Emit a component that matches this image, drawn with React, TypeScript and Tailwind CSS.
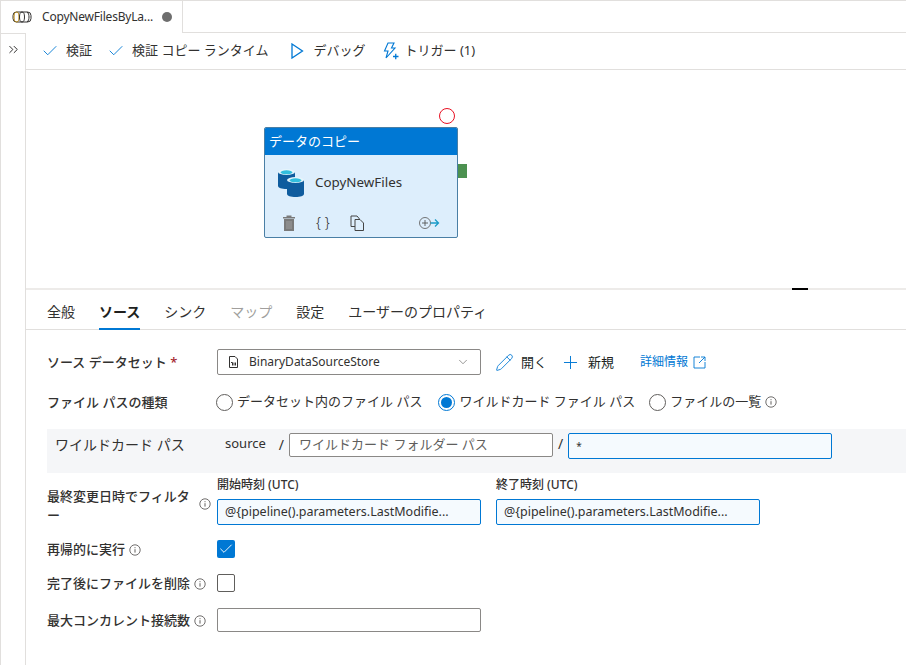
import React from "react";
import { ChevronDown, ChevronsRight, Check, Pencil, Plus } from "lucide-react";

const font = { fontFamily: '"Noto Sans", "Noto Sans CJK JP", sans-serif' };

const Info = () => (
  <svg width="12" height="12" viewBox="0 0 12 12" className="shrink-0 text-[#605e5c]" fill="none" stroke="currentColor">
    <circle cx="6" cy="6" r="5.2" strokeWidth="0.9" />
    <path d="M6 5.2v3.4M6 3.2v1" strokeWidth="1" />
  </svg>
);

const Radio = ({ checked }: { checked?: boolean }) => (
  <span
    className={
      "flex h-[17px] w-[17px] shrink-0 items-center justify-center rounded-full border " +
      (checked ? "border-[#0078d4]" : "border-[#605e5c]")
    }
  >
    {checked && <span className="h-[11px] w-[11px] rounded-full bg-[#0078d4]" />}
  </span>
);

const PipelineIcon = () => (
  <svg width="20" height="14" viewBox="0 0 20 14" fill="none" stroke="#323130" strokeWidth="1">
    <rect x="1" y="2" width="18" height="10" rx="3.5" />
    <ellipse cx="4.5" cy="7" rx="2.5" ry="5" stroke="#b8860b" />
    <ellipse cx="10" cy="7" rx="2.5" ry="5" />
    <path d="M15 2c1.5 1 2 3 2 5s-.5 4-2 5" />
  </svg>
);

const Cylinder = ({ className }: { className: string }) => (
  <svg width="17" height="20" viewBox="0 0 17 20" className={className}>
    <path d="M0 3v14c0 1.7 3.8 3 8.5 3s8.500-1.300 8.500-3V3z" fill="#0f5c9e" />
    <ellipse cx="8.500" cy="3" rx="8.500" ry="3" fill="#e6f5fb" />
    <ellipse cx="8.500" cy="3.300" rx="6" ry="2" fill="#32bedd" />
  </svg>
);

const TabItem = ({ label, active, muted }: { label: string; active?: boolean; muted?: boolean }) => (
  <div
    className={
      "mb-[-1px] flex h-[40px] items-center border-b-2 pt-[5px] text-[14px] " +
      (active ? "border-[#0078d4] font-semibold text-[#201f1e]" : "border-transparent ") +
      (muted ? "text-[#a19f9d]" : active ? "" : "text-[#323130]")
    }
  >
    {label}
  </div>
);

const Label = ({ children, info, className }: { children: React.ReactNode; info?: boolean; className?: string }) => (
  <div className={"flex w-[170px] shrink-0 items-center gap-[4px] text-[13px] font-medium text-[#323130] " + (className || "")}>
    <span className="whitespace-nowrap">{children}</span>
    {info && <Info />}
  </div>
);

export default function App() {
  return (
    <div className="h-[665px] w-[906px] overflow-hidden bg-white text-[#323130]" style={font}>
      {/* tab strip */}
      <div className="flex h-[33px] border-t border-[#e1dfdd]">
        <div className="flex w-[183px] items-center border-x border-[#e1dfdd] pl-[11px] text-[12px]">
          <PipelineIcon />
          <span className="ml-[10px] whitespace-nowrap tracking-[-0.2px]">CopyNewFilesByLa...</span>
          <span className="ml-[9px] h-[10px] w-[10px] rounded-full bg-[#6e6e6e]" />
        </div>
        <div className="flex-1 border-b border-[#e1dfdd]" />
      </div>

      <div className="flex h-[632px]">
        {/* collapsed side rail */}
        <div className="w-[26px] shrink-0 border-x border-t border-[#e1dfdd] pl-[5px] pt-[8px]">
          <ChevronsRight size={15} strokeWidth={1.6} />
        </div>

        <div className="min-w-0 flex-1">
          {/* toolbar */}
          <div className="flex h-[37px] items-center border-b border-[#e1dfdd] pl-[15px] text-[13px]">
            <Check size={18} strokeWidth={1.2} className="text-[#0078d4]" />
            <span className="ml-[7px]">検証</span>
            <Check size={18} strokeWidth={1.2} className="ml-[15px] text-[#0078d4]" />
            <span className="ml-[7px]">検証 コピー ランタイム</span>
            <svg width="13" height="16" viewBox="0 0 13 16" fill="none" stroke="#0078d4" strokeWidth="1.3" className="ml-[22px]">
              <path d="M1 1l10.500 7L1 15z" />
            </svg>
            <span className="ml-[10px]">デバッグ</span>
            <svg width="16" height="18" viewBox="0 0 16 18" fill="none" stroke="#0078d4" strokeWidth="1.1" className="ml-[17px]">
              <path d="M5 1h6L8.500 6H12L3 16l2-7H1.500z" />
              <path d="M10 14.500h5.500M12.750 11.750v5.500" strokeWidth="1.300" />
            </svg>
            <span className="ml-[6px]">トリガー (1)</span>
          </div>

          {/* canvas */}
          <div className="relative h-[220px] border-b-2 border-[#edebe9]">
            <span className="absolute left-[413px] top-[38px] h-[16px] w-[16px] rounded-full border border-[#e81123]" />
            <span className="absolute left-[432px] top-[94px] h-[14px] w-[9px] bg-[#4c9150]" />
            <div className="absolute left-[238px] top-[57px] h-[111px] w-[194px] overflow-hidden rounded-[2px] border border-[#4a7fa5] bg-[#ddeefc]">
              <div className="flex h-[27px] items-center bg-[#0078d4] pl-[4px] pt-[1px] text-[13px] text-white">データのコピー</div>
              <div className="flex h-[56px] items-center pl-[13px]">
                <div className="relative h-[28px] w-[26px]">
                  <Cylinder className="absolute left-0 top-0" />
                  <Cylinder className="absolute bottom-0 right-0" />
                </div>
                <span className="ml-[11px] mt-[-2px] text-[13.400px] text-[#323130]">CopyNewFiles</span>
              </div>
              <div className="flex items-center pl-[17px] pt-[4px] text-[#323130]">
                <svg width="14" height="16" viewBox="0 0 14 16">
                  <path d="M1 2h12v1.500H1zM4.500 .5h5V2h-5zM2 4h10v12H2z" fill="#7a7a7a" />
                  <path d="M5 6v8M7 6v8M9 6v8" stroke="#a8a8a8" strokeWidth="0.8" />
                </svg>
                <span className="ml-[20px] w-[14px] whitespace-nowrap text-[14px] font-light leading-none">{"{ }"}</span>
                <svg width="15" height="16" viewBox="0 0 15 16" fill="#ddeefc" stroke="#444" strokeWidth="1" className="ml-[20px]">
                  <path d="M1 1h6l2.500 3v7.500H1z" />
                  <path d="M5 4.500h5l3.500 3.500v7.500H5z" />
                </svg>
                <svg width="22" height="14" viewBox="0 0 22 14" fill="none" className="ml-[53px]">
                  <circle cx="7" cy="7" r="5.500" stroke="#666" strokeWidth="0.9" />
                  <path d="M4 7h6M7 4v6" stroke="#555" strokeWidth="0.9" />
                  <path d="M12.500 7h8M17 3.500 20.500 7 17 10.500" stroke="#1a9bc7" strokeWidth="1.300" />
                </svg>
              </div>
            </div>
            <span className="absolute left-[766px] top-[218px] h-[2px] w-[16px] bg-black" />
          </div>

          {/* property tabs */}
          <div className="flex h-[40px] items-end gap-[24px] border-b border-[#e1dfdd] pl-[21px]">
            <TabItem label="全般" />
            <TabItem label="ソース" active />
            <TabItem label="シンク" />
            <TabItem label="マップ" muted />
            <TabItem label="設定" />
            <TabItem label="ユーザーのプロパティ" />
          </div>

          {/* form */}
          <div className="pl-[21px] pt-[19px]">
            <div className="flex h-[26px] items-center">
              <Label className="pt-[1px]">
                ソース データセット <span className="text-[#a4262c]">*</span>
              </Label>
              <div className="flex h-[26px] w-[264px] items-center rounded-[2px] border border-[#8a8886] pl-[10px] pr-[10px] text-[12px]">
                <svg width="11" height="12" viewBox="0 0 11 12" fill="none" stroke="#323130" strokeWidth="1">
                  <path d="M1.500 .5h5.500l2.500 2.500v8.500h-8z" />
                  <path d="M3 6.500h1.500v3M6 6.500v3M7.500 6.500v3" />
                </svg>
                <span className="ml-[10px] flex-1">BinaryDataSourceStore</span>
                <ChevronDown size={14} strokeWidth={1.1} className="text-[#605e5c]" />
              </div>
              <Pencil size={19} strokeWidth={1.1} className="ml-[14px] text-[#0078d4]" />
              <span className="ml-[7px] pt-[2px] text-[13px] text-[#201f1e]">開く</span>
              <Plus size={21} strokeWidth={1.1} className="ml-[13px] text-[#0078d4]" />
              <span className="ml-[7px] pt-[2px] text-[13px] text-[#201f1e]">新規</span>
              <span className="ml-[26px] text-[12px] text-[#0078d4]">詳細情報</span>
              <svg width="13" height="13" viewBox="0 0 13 13" fill="none" stroke="#0078d4" strokeWidth="0.9" className="ml-[5px]">
                <path d="M7 1H1v11h11V6M8 1h4v4M12 1 6 7" />
              </svg>
            </div>

            <div className="mt-[14px] flex h-[26px] items-center text-[13px]">
              <Label className="pt-[2px]">ファイル パスの種類</Label>
              <span className="ml-[-1px]"><Radio /></span>
              <span className="ml-[4px]">データセット内のファイル パス</span>
              <span className="ml-[16px]"><Radio checked /></span>
              <span className="ml-[4px]">ワイルドカード ファイル パス</span>
              <span className="ml-[14px]"><Radio /></span>
              <span className="ml-[4px]">ファイルの一覧</span>
              <span className="ml-[4px]"><Info /></span>
            </div>

            <div className="mt-[14px] flex h-[44px] bg-[#f5f6f8] pl-[8px] pt-[4px]">
              <span className="w-[170px] pt-[1px] text-[14px]">ワイルドカード パス</span>
              <span className="pt-[1px] text-[13px]">source</span>
              <span className="ml-[13px] pt-[1px] text-[14px]">/</span>
              <div className="ml-[5px] flex h-[24px] w-[264px] items-center rounded-[2px] border border-[#8a8886] bg-white pl-[9px] text-[13px] text-[#605e5c]">
                ワイルドカード フォルダー パス
              </div>
              <span className="ml-[5px] text-[14px]">/</span>
              <div className="ml-[5px] flex h-[26px] w-[264px] items-center rounded-[2px] border border-[#0078d4] bg-[#f5fafe] pl-[7px] text-[10px]">
                *
              </div>
            </div>

            <div className="flex pt-[3px]">
              <div className="flex w-[170px] shrink-0 items-center pt-[10px] text-[13px] font-medium leading-[19px]">
                <span className="w-[148px]">最終変更日時でフィルター</span>
                <span className="ml-[4px] mt-[-4px]"><Info /></span>
              </div>
              <div>
                <div className="text-[12px] font-medium leading-[18px]">開始時刻 (UTC)</div>
                <div className="mt-[5px] flex h-[26px] w-[264px] items-center rounded-[2px] border border-[#0078d4] bg-[#f5fafe] pl-[7px] text-[12.500px]">
                  @{"{"}pipeline().parameters.LastModifie...
                </div>
              </div>
              <div className="ml-[15px]">
                <div className="text-[12px] font-medium leading-[18px]">終了時刻 (UTC)</div>
                <div className="mt-[5px] flex h-[26px] w-[264px] items-center rounded-[2px] border border-[#0078d4] bg-[#f5fafe] pl-[7px] text-[12.500px]">
                  @{"{"}pipeline().parameters.LastModifie...
                </div>
              </div>
            </div>

            <div className="mt-[15px] flex h-[18px] items-center">
              <Label info className="pt-[1px]">再帰的に実行</Label>
              <span className="flex h-[18px] w-[18px] items-center justify-center rounded-[2px] bg-[#0078d4]">
                <Check size={16} strokeWidth={1.4} className="text-white" />
              </span>
            </div>

            <div className="mt-[16px] flex h-[18px] items-center">
              <Label info className="pt-[1px]">完了後にファイルを削除</Label>
              <span className="h-[18px] w-[18px] rounded-[2px] border border-[#605e5c]" />
            </div>

            <div className="mt-[16px] flex h-[24px] items-center">
              <Label info className="pt-[1px]">最大コンカレント接続数</Label>
              <div className="h-[24px] w-[264px] rounded-[2px] border border-[#8a8886]" />
            </div>
          </div>
        </div>
      </div>
    </div>
  );
}
